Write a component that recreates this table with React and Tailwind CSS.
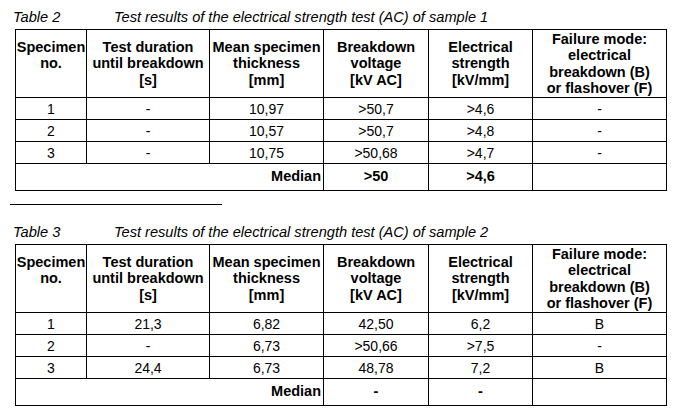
import React from 'react';

const cols = [71, 123, 114, 105, 104, 134];

const headers = [
  ['Specimen', 'no.', '\u00a0'],
  ['Test duration', 'until breakdown', '[s]'],
  ['Mean specimen', 'thickness', '[mm]'],
  ['Breakdown', 'voltage', '[kV AC]'],
  ['Electrical', 'strength', '[kV/mm]'],
  ['Failure mode:', 'electrical', 'breakdown (B)', 'or flashover (F)'],
];

const tables = [
  {
    no: 'Table 2',
    title: 'Test results of the electrical strength test (AC) of sample 1',
    rows: [
      ['1', '-', '10,97', '>50,7', '>4,6', '-'],
      ['2', '-', '10,57', '>50,7', '>4,8', '-'],
      ['3', '-', '10,75', '>50,68', '>4,7', '-'],
    ],
    median: ['>50', '>4,6'],
  },
  {
    no: 'Table 3',
    title: 'Test results of the electrical strength test (AC) of sample 2',
    rows: [
      ['1', '21,3', '6,82', '42,50', '6,2', 'B'],
      ['2', '-', '6,73', '>50,66', '>7,5', '-'],
      ['3', '24,4', '6,73', '48,78', '7,2', 'B'],
    ],
    median: ['-', '-'],
  },
];

function ResultTable({ t }) {
  return (
    <div>
      <div className="flex h-[16px] items-center text-[14.6px] italic leading-[16px] text-black">
        <span className="w-[104px] pl-[3px]">{t.no}</span>
        <span>{t.title}</span>
      </div>
      <table className="ml-[5px] mt-[4px] table-fixed border-collapse text-black">
        <colgroup>
          {cols.map((w, i) => (
            <col key={i} style={{ width: w }} />
          ))}
        </colgroup>
        <tbody>
          <tr className="h-[68px]">
            {headers.map((h, i) => (
              <td key={i} className="border border-black p-0 text-center align-middle text-[14.5px] font-bold leading-[16.5px]">
                {h.map((line, j) => (
                  <div key={j}>{line}</div>
                ))}
              </td>
            ))}
          </tr>
          {t.rows.map((r, i) => (
            <tr key={i} className="h-[22px]">
              {r.map((c, j) => (
                <td key={j} className="border border-black p-0 text-center align-middle text-[14px] leading-[16px]">
                  {c}
                </td>
              ))}
            </tr>
          ))}
          <tr className="h-[27px]">
            <td colSpan={3} className="border border-black p-0 pr-[2px] text-right align-middle text-[14.5px] font-bold">
              Median
            </td>
            <td className="border border-black p-0 text-center align-middle text-[14.5px] font-bold">{t.median[0]}</td>
            <td className="border border-black p-0 text-center align-middle text-[14.5px] font-bold">{t.median[1]}</td>
            <td className="border border-black p-0" />
          </tr>
        </tbody>
      </table>
    </div>
  );
}

export default function App() {
  return (
    <div
      className="h-[416px] w-[684px] overflow-hidden bg-white pl-[10px] pt-[9px]"
      style={{ fontFamily: '"Liberation Sans", Arial, sans-serif' }}
    >
      <ResultTable t={tables[0]} />
      <div className="mt-[13px] h-px w-[212px] bg-black" />
      <div className="mt-[19px]">
        <ResultTable t={tables[1]} />
      </div>
    </div>
  );
}
